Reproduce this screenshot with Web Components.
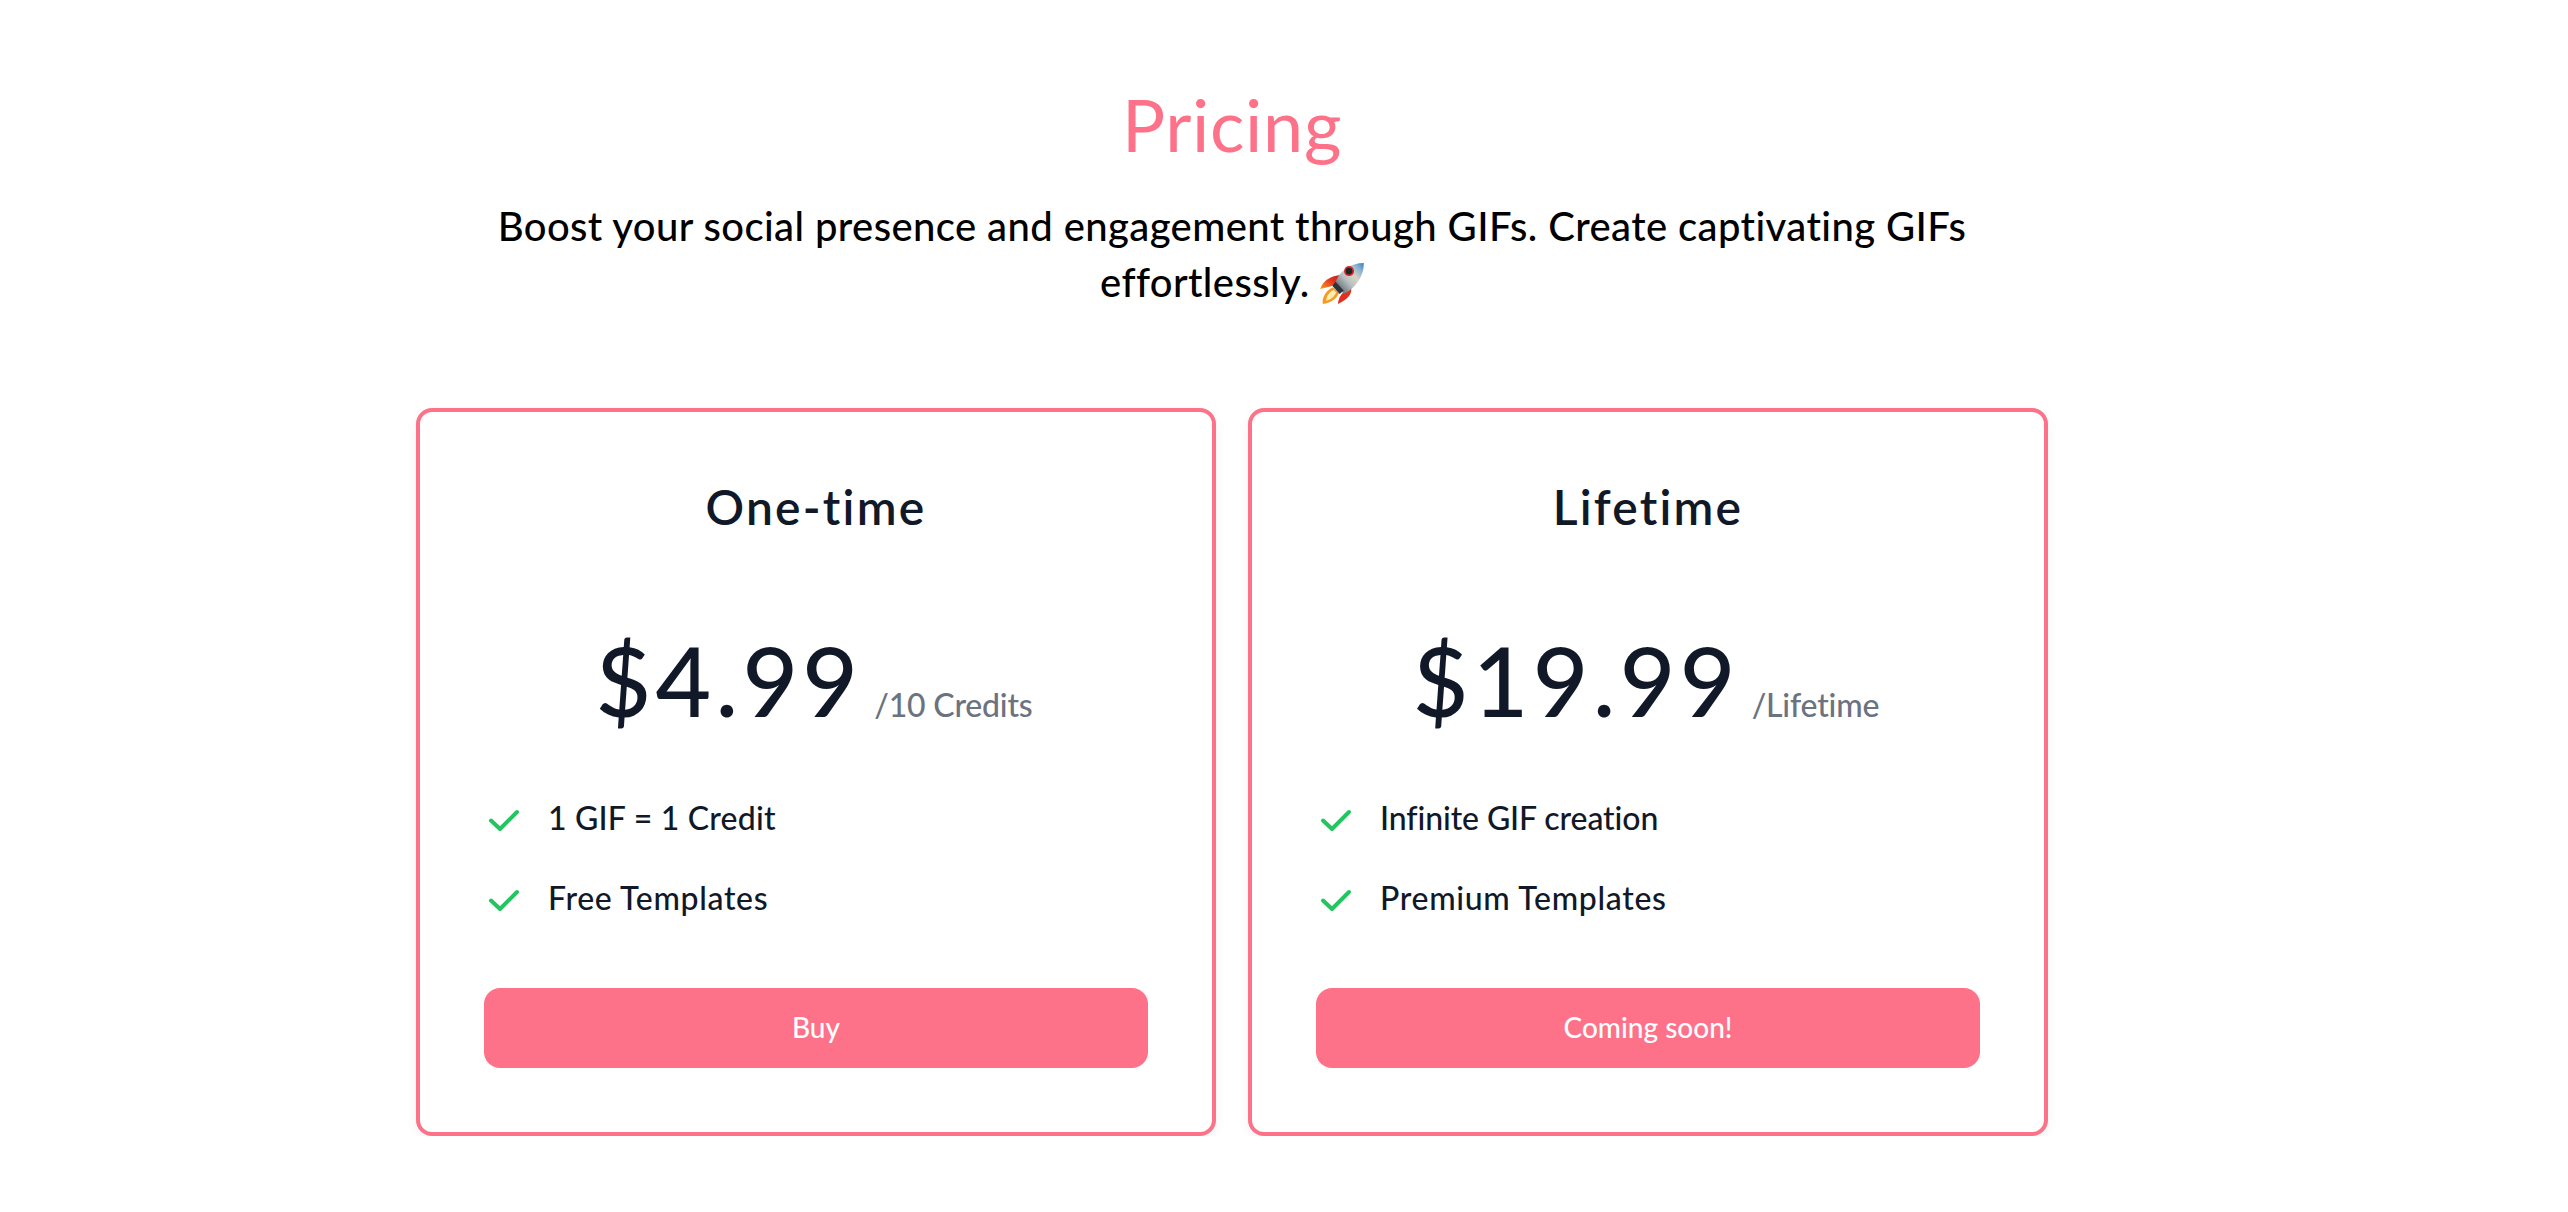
<!DOCTYPE html>
<html lang="en">
<head>
<meta charset="utf-8">
<title>Pricing</title>
<style>
  body { margin: 0; background: #fff; font-family: "Lato", "Liberation Sans", sans-serif; }
</style>
</head>
<body>
<pricing-section>
  <span slot="title">Pricing</span>
  <span slot="lead">Boost your social presence and engagement through GIFs. Create captivating GIFs effortlessly.</span>
  <pricing-card name="One-time" price="$4.99" unit="/10 Credits" action="Buy">
    <check-item style="--track:.2px">1 GIF = 1 Credit</check-item>
    <check-item style="--track:.65px">Free Templates</check-item>
  </pricing-card>
  <pricing-card name="Lifetime" price="$19.99" unit="/Lifetime" action="Coming soon!">
    <check-item style="--track:-.1px">Infinite GIF creation</check-item>
    <check-item style="--track:.68px">Premium Templates</check-item>
  </pricing-card>
</pricing-section>

<script>
class PricingSection extends HTMLElement {
    constructor() {
        super();
        this.shadowDOM = this.attachShadow({mode:'open'});
        this.shadowDOM.innerHTML = `
        <style>
            * { margin: 0; padding: 0; box-sizing: border-box; }
            :host { display: block; width: 2464px; padding-top: 84px; }
            h1 {
                font-size: 72px; line-height: 80px; font-weight: 400;
                color: #fd7289; text-align: center; letter-spacing: .7px;
            }
            p {
                width: 1500px; margin: 34px auto 0;
                font-size: 40px; line-height: 56px; color: #000; text-align: center;
                font-weight: 500; letter-spacing: .4px;
            }
            svg { width: 44px; height: 41px; vertical-align: -7px; }
            .cards {
                display: grid; grid-template-columns: 800px 800px; gap: 32px;
                justify-content: center; margin-top: 98px;
            }
        </style>
        <h1><slot name="title"></slot></h1>
        <p><slot name="lead"></slot> <svg viewBox="42 48 130 122" aria-hidden="true">
            <defs>
                <linearGradient id="body" x1="0" y1="1" x2="1" y2="0">
                    <stop offset="0" stop-color="#3f4a54"/>
                    <stop offset=".42" stop-color="#b9c0c2"/>
                    <stop offset=".62" stop-color="#d8d4c4"/>
                    <stop offset=".82" stop-color="#8db3cf"/>
                    <stop offset="1" stop-color="#2f7fc4"/>
                </linearGradient>
                <linearGradient id="fin" x1="0" y1="1" x2="1" y2="0">
                    <stop offset="0" stop-color="#f9a01e"/>
                    <stop offset=".6" stop-color="#e4321f"/>
                    <stop offset="1" stop-color="#c81e1e"/>
                </linearGradient>
            </defs>
            <path d="M42 125 C52 100 72 88 100 84 L90 112 L72 118 Z" fill="url(#fin)"/>
            <path d="M95 170 C96 150 108 132 134 122 C138 142 122 158 95 170 Z" fill="#e0301f"/>
            <path d="M50 170 C46 148 62 128 80 120 L98 138 C90 155 72 168 50 170 Z" fill="#f59a23"/>
            <path d="M60 160 C60 146 70 134 82 128 L90 136 C84 148 74 158 60 160 Z" fill="#ffeeb0"/>
            <path d="M88 104 C100 72 132 48 172 48 C172 88 148 122 112 140 Z" fill="url(#body)"/>
            <path d="M78 116 L88 104 L112 130 L100 140 Z" fill="#2e3338"/>
            <circle cx="128" cy="72" r="15" fill="#d92a2a"/>
            <circle cx="128" cy="72" r="10" fill="#20242a"/>
        </svg></p>
        <div class="cards"><slot></slot></div>
        `;
    }
}

class PricingCard extends HTMLElement {
    constructor() {
        super();
        this.shadowDOM = this.attachShadow({mode:'open'});
    }

    connectedCallback() {
        this.shadowDOM.innerHTML = `
        <style>
            * { margin: 0; padding: 0; box-sizing: border-box; }
            :host {
                display: flex; flex-direction: column;
                border: 4px solid #fd7289; border-radius: 16px;
                padding: 64px; background: #fff;
                box-shadow: 0 4px 12px rgba(0, 0, 0, .06);
            }
            h3 {
                height: 62px;
                font-size: 48px; line-height: 62px; font-weight: 600;
                color: #111827; text-align: center; letter-spacing: 2.2px;
            }
            .price {
                display: flex; justify-content: center; align-items: baseline;
                margin: 94px 0 68px; padding-right: 4px;
            }
            .amount { font-size: 96px; line-height: 96px; font-weight: 500; color: #111827; letter-spacing: 4.3px; }
            .unit { margin-left: 12px; font-size: 32px; line-height: 40px; color: #6b7280; font-weight: 500; letter-spacing: -.2px; }
            ul { display: flex; flex-direction: column; gap: 32px; list-style: none; }
            button {
                display: block; width: 100%; height: 80px; margin-top: 64px; padding-bottom: 3px;
                border: 0; border-radius: 16px; background: #fd7289;
                color: #fff; font: inherit; font-size: 28px; font-weight: 500;
            }
        </style>
        <h3>${this.getAttribute('name')}</h3>
        <div class="price">
            <span class="amount">${this.getAttribute('price')}</span>
            <span class="unit">${this.getAttribute('unit')}</span>
        </div>
        <ul><slot></slot></ul>
        <button>${this.getAttribute('action')}</button>
        `;
    }
}

class CheckItem extends HTMLElement {
    constructor() {
        super();
        this.shadowDOM = this.attachShadow({mode:'open'});
        this.shadowDOM.innerHTML = `
        <style>
            :host {
                display: flex; align-items: center; gap: 28px; height: 48px;
                font-size: 32px; line-height: 44px; color: #111827;
                font-weight: 500; letter-spacing: var(--track, .3px);
            }
            svg { width: 32px; height: 24px; flex: none; margin-left: 4px; }
            span { padding-bottom: 4px; }
        </style>
        <svg viewBox="0 0 32 24" fill="none" stroke="#22c55e" stroke-width="4" stroke-linecap="round" stroke-linejoin="round" aria-hidden="true">
            <path d="M3 12.5 L12 21 L29 4"/>
        </svg>
        <span><slot></slot></span>
        `;
    }
}

customElements.define('pricing-section', PricingSection);
customElements.define('pricing-card', PricingCard);
customElements.define('check-item', CheckItem);
</script>
</body>
</html>
